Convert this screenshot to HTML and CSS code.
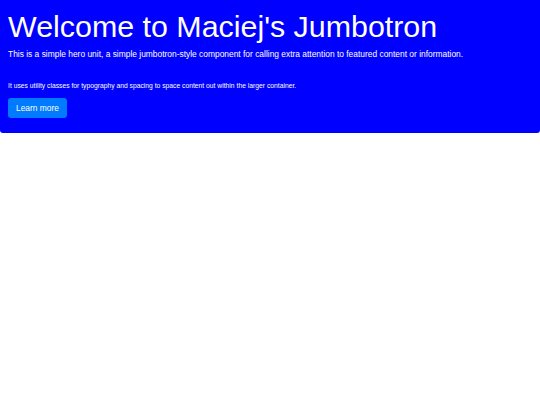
FILE: index.html
```html
<!DOCTYPE html>
<html>
<head>
<meta charset="utf-8">
<link rel="stylesheet" href="styles.css">
</head>
<body>
<div class="jumbotron">
  <h1 class="title">Welcome to Maciej's Jumbotron</h1>
  <p class="lead">This is a simple hero unit, a simple jumbotron-style component for calling extra attention to featured content or information.</p>
  <p class="small">It uses utility classes for typography and spacing to space content out within the larger container.</p>
  <a class="btn" href="#">Learn more</a>
</div>
</body>
</html>
```

FILE: styles.css
```css
* { box-sizing: border-box; }
html, body { margin: 0; padding: 0; background: #fff; }
body { font-family: "Liberation Sans", Arial, sans-serif; }
.jumbotron {
  background: #0000ff;
  color: #fff;
  padding: 8px 8px 14.7px 8px;
  border-radius: 0 0 3px 3px;
  display: flex;
  flex-direction: column;
  align-items: flex-start;
}
.title {
  margin: 0;
  font-size: 30.4px;
  font-weight: 400;
  line-height: 36px;
}
.lead {
  margin: 4px 0 0 0;
  font-size: 8.42px;
  line-height: 12.75px;
}
.small {
  margin: 20.5px 0 0 0;
  font-size: 6.75px;
  line-height: 10px;
}
.btn {
  margin-top: 7px;
  background: #007bff;
  color: #fff;
  text-decoration: none;
  font-size: 8.4px;
  line-height: 12.75px;
  padding: 4.2px 8px 3px 8px;
  border-radius: 3px;
}
```
